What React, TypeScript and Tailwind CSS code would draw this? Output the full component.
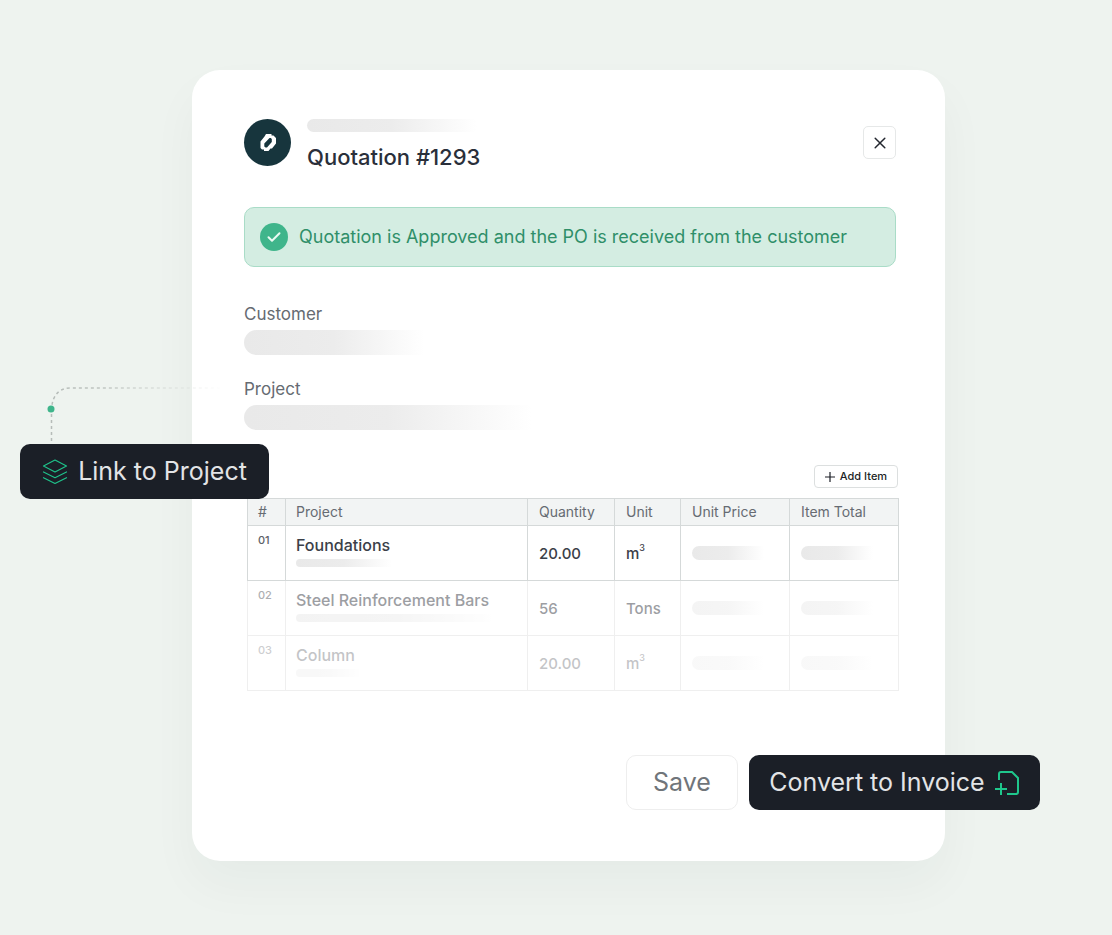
import React from 'react';

interface QuotationItem {
  id: string;
  name: string;
  quantity: string;
  unit: string;
  power?: string;
  barWidth: string;
  opacity: string;
}

const items: QuotationItem[] = [
  {
    id: '01',
    name: 'Foundations',
    quantity: '20.00',
    unit: 'm',
    power: '3',
    barWidth: 'w-24',
    opacity: '',
  },
  {
    id: '02',
    name: 'Steel Reinforcement Bars',
    quantity: '56',
    unit: 'Tons',
    barWidth: 'w-[196px]',
    opacity: 'opacity-50',
  },
  {
    id: '03',
    name: 'Column',
    quantity: '20.00',
    unit: 'm',
    power: '3',
    barWidth: 'w-16',
    opacity: 'opacity-30',
  },
];

const columns = [
  { label: '#', width: 'w-[38px] pl-[10px]' },
  { label: 'Project', width: 'pl-[10px]' },
  { label: 'Quantity', width: 'w-[87px] pl-[11px]' },
  { label: 'Unit', width: 'w-[66px] pl-[11px]' },
  { label: 'Unit Price', width: 'w-[109px] pl-[11px]' },
  { label: 'Item Total', width: 'w-[109px] pl-[11px]' },
];

const Skeleton: React.FC<{ className: string }> = ({ className }) => (
  <div className={`rounded-l-full bg-linear-to-r from-[#e9e9e9] via-[#ececec] to-white ${className}`} />
);

const Logo = () => (
  <div className="flex h-[47px] w-[47px] shrink-0 items-center justify-center rounded-full bg-[#17353d]">
    <svg width="18" height="19" viewBox="0 0 18 19">
      <path
        fillRule="evenodd"
        fill="#fff"
        d="M7 1H12.500V2.500H14.500L17 5V10.500L13 15.500H11.500L9.500 18H5V16.500H3L1.500 15V8.500L5.500 3.500ZM10.500 5 5.300 10.500V13.500L6.500 14.500H8L12.800 9V6L11.800 5Z"
      />
    </svg>
  </div>
);

const LayersIcon = () => (
  <svg width="26" height="26" viewBox="0 0 26 26" fill="none" stroke="#1fc28a" strokeWidth="1.200" strokeLinejoin="round" strokeLinecap="round">
    <path d="M13 1 1.500 7 13 13 24.500 7Z" />
    <path d="M1.500 13 13 18.700 24.500 13" />
    <path d="M1.500 18.700 13 24.500 24.500 18.700" />
  </svg>
);

const InvoiceIcon = () => (
  <svg width="26" height="26" viewBox="0 0 26 26" fill="none" stroke="#1fc78c" strokeWidth="2">
    <path d="M5 10V4Q5 2 7 2H18L24 8V22Q24 24 22 24H13" />
    <path d="M7 13V25M1 19H13" />
  </svg>
);

const App: React.FC = () => {
  return (
    <main
      className="min-h-screen overflow-hidden bg-[#eef3ef] pt-[70px] pb-[74px] pl-[25px]"
      style={{ fontFamily: 'Inter, sans-serif' }}
    >
      <section className="relative mx-auto max-w-[753px] rounded-[28px] bg-white pt-[49px] pr-[49px] pb-[51px] pl-[52px] shadow-[0_24px_48px_rgba(23,53,45,0.04)]">
        <header className="flex items-start justify-between">
          <div className="flex gap-4">
            <Logo />
            <div>
              <Skeleton className="h-[13px] w-[170px]" />
              <h1 className="mt-[11px] text-[22px] leading-7 font-medium text-[#2a2f3a]">Quotation #1293</h1>
            </div>
          </div>
          <button
            type="button"
            aria-label="Close"
            className="mt-[7px] flex h-[33px] w-[33px] items-center justify-center rounded-[5px] border border-[#e6e8e8] text-[#23272f]"
          >
            <svg width="12" height="12" viewBox="0 0 12 12" stroke="currentColor" strokeWidth="1.500" strokeLinecap="round">
              <path d="M1.200 1.200 10.800 10.800M10.800 1.200 1.200 10.800" />
            </svg>
          </button>
        </header>

        <div className="mt-9 flex h-[60px] items-center gap-[11px] rounded-[10px] border border-[#a9dcc7] bg-[#d4ede2] px-[15px]">
          <span className="flex h-7 w-7 shrink-0 items-center justify-center rounded-full bg-[#3fb58b]">
            <svg width="14" height="12" viewBox="0 0 14 12" fill="none" stroke="#eafaf3" strokeWidth="2" strokeLinecap="round" strokeLinejoin="round">
              <path d="M1.500 6.300 5 9.800 12.500 2.200" />
            </svg>
          </span>
          <p className="text-[18px] leading-6 text-[#2f8f69]">
            Quotation is Approved and the PO is received from the customer
          </p>
        </div>

        <div className="mt-[35px] flex flex-col gap-[22px]">
          <div>
            <h2 className="text-[17px] leading-6 text-[#666b72]">Customer</h2>
            <Skeleton className="mt-1 h-[25px] w-[180px]" />
          </div>
          <div>
            <h2 className="text-[17px] leading-6 text-[#666b72]">Project</h2>
            <Skeleton className="mt-1 h-[25px] w-[288px]" />
          </div>
        </div>

        <div className="-mr-[3px] ml-[3px] mt-[35px]">
          <div className="flex justify-end pr-px">
            <button
              type="button"
              className="flex h-[23px] w-[84px] items-center justify-center gap-[5px] rounded border border-[#dcdfdf] text-[11px] font-medium text-[#1c1f26]"
            >
              <svg width="10" height="10" viewBox="0 0 10 10" stroke="currentColor" strokeWidth="1.200">
                <path d="M5 0V10M0 5H10" />
              </svg>
              Add Item
            </button>
          </div>

          <table className="mt-[10px] w-full table-fixed border-collapse text-left">
            <thead>
              <tr className="h-[27px] bg-[#f2f4f4]">
                {columns.map((column) => (
                  <th
                    key={column.label}
                    className={`border border-[#d5d9d9] py-0 pr-0 text-[14px] leading-5 font-normal text-[#666b72] ${column.width}`}
                  >
                    {column.label}
                  </th>
                ))}
              </tr>
            </thead>
            <tbody className="font-medium text-[#3b4048]">
              {items.map((item, index) => {
                const cell = `border py-0 pr-0 ${index === 0 ? 'border-[#d5d9d9]' : 'border-[#efefef]'}`;
                return (
                  <tr key={item.id} className="h-[55px]">
                    <td className={`${cell} pl-[10px] align-top`}>
                      <div className={`pt-1.5 text-[11px] leading-4 text-[#5c6067] ${item.opacity}`}>{item.id}</div>
                    </td>
                    <td className={`${cell} pl-[10px] align-top`}>
                      <div className={item.opacity}>
                        <div className="pt-[7px] text-[16px] leading-6">{item.name}</div>
                        <Skeleton className={`mt-0.5 h-2 ${item.barWidth}`} />
                      </div>
                    </td>
                    <td className={`${cell} pl-[11px]`}>
                      <div className={`pt-px text-[15px] leading-6 ${item.opacity}`}>{item.quantity}</div>
                    </td>
                    <td className={`${cell} pl-[11px]`}>
                      <div className={`pt-px text-[15px] leading-6 ${item.opacity}`}>
                        {item.unit}
                        {item.power && <sup className="-top-2 text-[9px]">{item.power}</sup>}
                      </div>
                    </td>
                    <td className={`${cell} pl-[11px]`}>
                      <Skeleton className={`h-[14px] w-[72px] ${item.opacity}`} />
                    </td>
                    <td className={`${cell} pl-[11px]`}>
                      <Skeleton className={`h-[14px] w-[72px] ${item.opacity}`} />
                    </td>
                  </tr>
                );
              })}
            </tbody>
          </table>
        </div>

        <footer className="-mr-36 mt-16 flex justify-end gap-[11px]">
          <button
            type="button"
            className="h-[55px] w-28 rounded-[10px] border border-[#eeeeee] bg-white text-[25px] text-[#70757a]"
          >
            Save
          </button>
          <button
            type="button"
            className="flex h-[55px] w-[291px] items-center justify-center gap-[9px] rounded-[10px] bg-[#1b1f27] text-[25px] whitespace-nowrap text-[#e3e4e6]"
          >
            Convert to Invoice
            <InvoiceIcon />
          </button>
        </footer>

        {/* callout pinned over the left edge of the card */}
        <div className="absolute top-[317px] -left-[172px]">
          <svg className="ml-[27px]" width="178" height="57" viewBox="0 0 178 57" fill="none">
            <defs>
              <linearGradient id="trail" gradientUnits="userSpaceOnUse" x1="0" y1="0" x2="178" y2="0">
                <stop offset="0" stopColor="#b5bbb8" />
                <stop offset="0.300" stopColor="#bfc5c1" />
                <stop offset="1" stopColor="#d8dcd9" stopOpacity="0" />
              </linearGradient>
            </defs>
            <path d="M4.500 54V22Q6 1 24 1H178" stroke="url(#trail)" strokeWidth="1.500" strokeDasharray="3 3" />
            <circle cx="4" cy="22" r="3.500" fill="#3fb58b" />
          </svg>
          <button
            type="button"
            className="flex h-[55px] w-[249px] items-center justify-center gap-[10px] rounded-[10px] bg-[#1b1f27] text-[25px] whitespace-nowrap text-[#e3e4e6]"
          >
            <LayersIcon />
            Link to Project
          </button>
        </div>
      </section>
    </main>
  );
};

export default App;
